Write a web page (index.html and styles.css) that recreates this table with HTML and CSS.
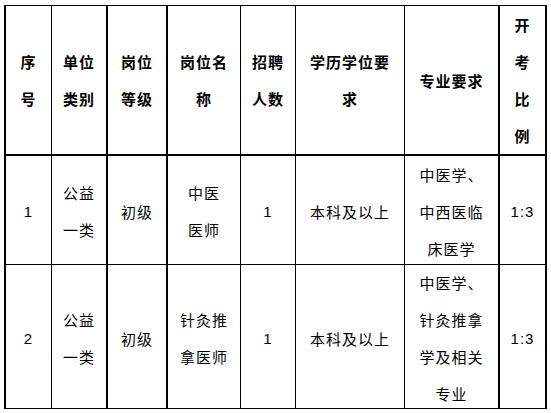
FILE: index.html
```html
<!DOCTYPE html>
<html lang="zh-CN">
<head>
<meta charset="utf-8">
<title>招聘岗位表</title>
<link rel="stylesheet" href="styles.css">
</head>
<body>
<table class="grid">
  <thead>
    <tr class="head">
      <th class="c1"><div class="cell"><div>序</div><div>号</div></div></th>
      <th class="c2"><div class="cell"><div>单位</div><div>类别</div></div></th>
      <th class="c3"><div class="cell"><div>岗位</div><div>等级</div></div></th>
      <th class="c4"><div class="cell"><div>岗位名</div><div>称</div></div></th>
      <th class="c5"><div class="cell"><div>招聘</div><div>人数</div></div></th>
      <th class="c6"><div class="cell"><div>学历学位要</div><div>求</div></div></th>
      <th class="c7"><div class="cell"><div>专业要求</div></div></th>
      <th class="c8"><div class="cell"><div>开</div><div>考</div><div>比</div><div>例</div></div></th>
    </tr>
  </thead>
  <tbody>
    <tr class="r1">
      <td class="c1"><div class="cell"><div class="num">1</div></div></td>
      <td class="c2"><div class="cell"><div>公益</div><div>一类</div></div></td>
      <td class="c3"><div class="cell"><div>初级</div></div></td>
      <td class="c4"><div class="cell"><div>中医</div><div>医师</div></div></td>
      <td class="c5"><div class="cell"><div class="num">1</div></div></td>
      <td class="c6"><div class="cell"><div>本科及以上</div></div></td>
      <td class="c7"><div class="cell"><div>中医学、</div><div>中西医临</div><div>床医学</div></div></td>
      <td class="c8"><div class="cell"><div class="num">1:3</div></div></td>
    </tr>
    <tr class="r2">
      <td class="c1"><div class="cell"><div class="num">2</div></div></td>
      <td class="c2"><div class="cell"><div>公益</div><div>一类</div></div></td>
      <td class="c3"><div class="cell"><div>初级</div></div></td>
      <td class="c4"><div class="cell"><div>针灸推</div><div>拿医师</div></div></td>
      <td class="c5"><div class="cell"><div class="num">1</div></div></td>
      <td class="c6"><div class="cell"><div>本科及以上</div></div></td>
      <td class="c7"><div class="cell"><div>中医学、</div><div>针灸推拿</div><div>学及相关</div><div>专业</div></div></td>
      <td class="c8"><div class="cell"><div class="num">1:3</div></div></td>
    </tr>
  </tbody>
</table>
</body>
</html>
```
FILE: styles.css
```css
html, body {
  margin: 0;
  padding: 0;
  background: #ffffff;
}

.grid {
  margin: 5px 0 0 4px;
  border-collapse: separate;
  border-spacing: 0;
  table-layout: fixed;
  border-left: 2px solid #000;
  border-top: 1px solid #000;
  font-family: "Noto Sans CJK SC", "Noto Sans", sans-serif;
  font-size: 15px;
  color: #000;
}

.grid th,
.grid td {
  padding: 0;
  vertical-align: top;
  border-right: 1px solid #000;
  border-bottom: 1px solid #000;
  overflow: visible;
}

.grid th {
  border-bottom-width: 2px;
}

.c1 { width: 45px; }
.c2 { width: 54px; border-right-width: 2px !important; }
.c3 { width: 58px; border-right-width: 2px !important; }
.c4 { width: 72px; }
.c5 { width: 54px; }
.c6 { width: 108px; }
.c7 { width: 93px; border-right-width: 2px !important; }
.c8 { width: 45px; border-right-width: 2px !important; }

.cell {
  display: flex;
  flex-direction: column;
  justify-content: center;
  align-items: center;
  text-align: center;
  line-height: 37px;
  letter-spacing: 1px;
  white-space: nowrap;
}

.head .cell {
  height: 148px;
  font-weight: bold;
}

.r1 .cell {
  height: 108px;
  padding-top: 2px;
  box-sizing: border-box;
}

.r2 .cell {
  height: 143px;
  padding-top: 3px;
  box-sizing: border-box;
}

.num {
  font-family: "Liberation Sans", sans-serif;
  letter-spacing: 1px;
}
```
